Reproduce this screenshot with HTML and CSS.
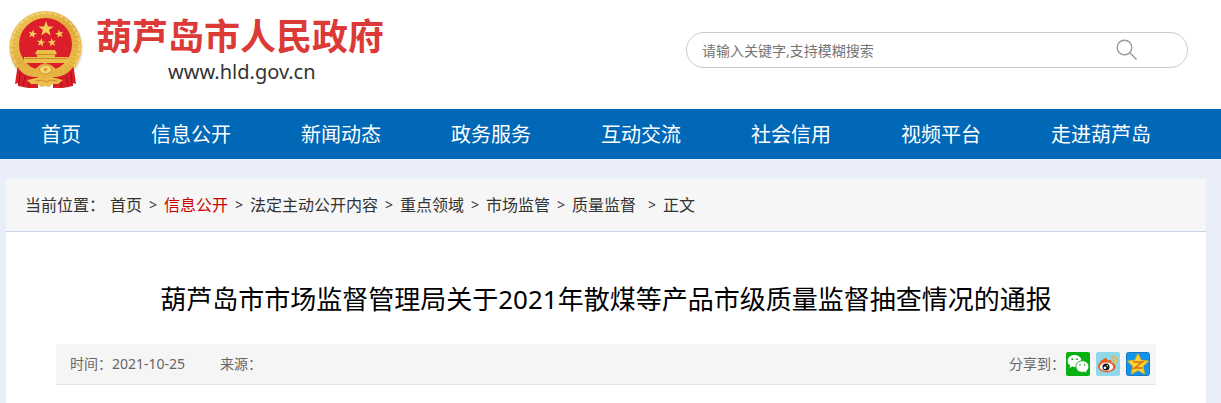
FILE: index.html
```html
<!DOCTYPE html>
<html lang="zh-CN">

<head>
    <meta charset="UTF-8">
    <meta name="viewport" content="width=device-width, initial-scale=1.0">
    <title>葫芦岛市人民政府</title>
    <link rel="stylesheet" href="styles.css">
</head>

<body>
    <header class="header">
        <div class="wrap header-inner">
            <a class="logo" href="#">
                <svg class="emblem" viewBox="0 0 78 84" aria-hidden="true">
                    <defs>
                        <linearGradient id="gold" x1="0" y1="0" x2="1" y2="1">
                            <stop offset="0" stop-color="#f3cf62" />
                            <stop offset="0.5" stop-color="#e2ad3c" />
                            <stop offset="1" stop-color="#f0c553" />
                        </linearGradient>
                        <path id="star" d="M0-10 2.4-3.1 9.5-3.1 3.8 1.2 5.9 8.1 0 4-5.9 8.1-3.8 1.2-9.5-3.1-2.4-3.1z" />
                    </defs>
                    <circle cx="38" cy="40" r="37" fill="#e9e4df" />
                    <circle cx="37.500" cy="39" r="36" fill="url(#gold)" />
                    <circle cx="37.500" cy="39" r="31" fill="none" stroke="#c88d28" stroke-width="7" stroke-dasharray="1 3" opacity="0.3" />
                    <circle cx="37.500" cy="39" r="34" fill="none" stroke="#fae697" stroke-width="2" stroke-dasharray="4 2" opacity="0.5" />
                    <path fill="#d81e28" d="M10 57q3 8 12 10l8 2v11H20l-10-2 0-3-3 1 2-14zM65 57q-3 8-12 10l-8 2v11h10l10-2 0-3 3 1-2-14z" />
                    <path stroke="#9c1520" stroke-width="1" fill="none" d="M12 64l-1 13M17 68l-2 10M22 70l-1 9M63 64l1 13M58 68l2 10M53 70l1 9" />
                    <circle cx="37.500" cy="36.500" r="26.500" fill="#dc1e2b" />
                    <g fill="#f5cf5b">
                        <use href="#star" transform="translate(38 21) scale(.8)" />
                        <use href="#star" transform="translate(24.500 26) rotate(12) scale(.45)" />
                        <use href="#star" transform="translate(51.500 26) rotate(-12) scale(.45)" />
                        <use href="#star" transform="translate(33 34.500) rotate(8) scale(.45)" />
                        <use href="#star" transform="translate(44 34.500) rotate(-8) scale(.45)" />
                    </g>
                    <path fill="#edbd4a" d="M29 42h18l2 4-2 0v3h13v6H16v-6h13v-3h-2z" />
                    <path stroke="#c98727" stroke-width="1" fill="none" d="M28 46.500h20M17 50.500h42" />
                    <path fill="#e6b241" d="M14 55q5 5 13 6l5-4 5-2 6 2 5 4q8-1 13-6l5 3q-7 10-18 11l-6 0-5 3-5-3-6 0q-12-1-17-11z" />
                    <ellipse cx="37.500" cy="61.500" rx="6" ry="4.500" fill="#f6d672" stroke="#c98727" stroke-width="0.800" />
                    <circle cx="37.500" cy="61.500" r="1.700" fill="#d99b31" />
                    <path fill="#edbd4a" d="M24 71l8-2 5 2 6-2 8 2 4 1-5 4-6 0-3 3-4-1-4 1-3-3-7 0-4-4z" />
                    <path stroke="#c98727" fill="none" d="M28 73l6-1 4 2 5-2 6 1" />
                </svg>
                <span class="logo-text">
                    <span class="logo-name">葫芦岛市人民政府</span>
                    <span class="logo-url">www.hld.gov.cn</span>
                </span>
            </a>
            <form class="search" role="search">
                <input class="search-input" type="text" aria-label="搜索" placeholder="请输入关键字,支持模糊搜索">
                <button class="search-btn" type="button" aria-label="搜索">
                    <svg width="22" height="22" viewBox="0 0 22 22" fill="none" stroke="#999" stroke-width="1.4">
                        <circle cx="8.500" cy="8.500" r="7.300" />
                        <path d="M13.600 13.600L20.500 20.500" />
                    </svg>
                </button>
            </form>
        </div>
    </header>

    <nav class="nav">
        <div class="wrap nav-inner">
            <a href="#">首页</a>
            <a href="#">信息公开</a>
            <a href="#">新闻动态</a>
            <a href="#">政务服务</a>
            <a href="#">互动交流</a>
            <a href="#">社会信用</a>
            <a href="#">视频平台</a>
            <a href="#">走进葫芦岛</a>
        </div>
    </nav>

    <main class="wrap main">
        <div class="crumbs">
            <span class="crumbs-label">当前位置：</span>
            <a href="#">首页</a>
            <span class="sep">&gt;</span>
            <a class="active" href="#">信息公开</a>
            <span class="sep">&gt;</span>
            <a href="#">法定主动公开内容</a>
            <span class="sep">&gt;</span>
            <a href="#">重点领域</a>
            <span class="sep">&gt;</span>
            <a href="#">市场监管</a>
            <span class="sep">&gt;</span>
            <a href="#">质量监督</a>
            <span class="sep sep-last">&gt;</span>
            <span>正文</span>
        </div>

        <article class="article">
            <h1 class="title">葫芦岛市市场监督管理局关于2021年散煤等产品市级质量监督抽查情况的通报</h1>
            <div class="meta">
                <span class="date">时间：2021-10-25</span>
                <span>来源：</span>
                <div class="share">
                    <span class="share-label">分享到：</span>
                    <a href="#" aria-label="微信">
                        <svg width="24" height="24" viewBox="0 0 24 24">
                            <rect width="24" height="24" rx="2" fill="#08b112" />
                            <path fill="#fff" d="M8.500 3C4.600 3 1.700 5.600 1.700 8.900c0 2 1 3.600 2.600 4.700L3.600 16l2.700-1.500 2.400.4C12.600 14.900 15.500 12.300 15.500 8.900S12.400 3 8.500 3z" />
                            <path fill="#fff" stroke="#08b112" d="M16.300 8.700c-3.700 0-6.400 2.600-6.400 5.800s2.700 5.900 6.400 5.900l2-.3 2.800 1.600-.7-2.500c1.500-1.100 2.500-2.800 2.500-4.700 0-3.200-2.900-5.800-6.600-5.800z" />
                            <g fill="#08a012">
                                <circle cx="6.200" cy="7.200" r="0.900" />
                                <circle cx="11" cy="7.200" r="0.900" />
                                <circle cx="14" cy="13" r="0.800" />
                                <circle cx="18.600" cy="13" r="0.800" />
                            </g>
                        </svg>
                    </a>
                    <a href="#" aria-label="新浪微博">
                        <svg width="24" height="24" viewBox="0 0 24 24">
                            <rect width="24" height="24" rx="2" fill="#90d7e9" />
                            <path fill="#ee5a20" d="M8.800 6.300c1.600-.8 2.600.3 2.200 2.300 2.700-1.100 5-.8 4.500 1.800 2.500.6 4 2 4 4 0 3.400-4.300 5.800-9 5.800S2 18 2 14.600c0-3 3.700-6.800 6.800-8.300z" />
                            <ellipse cx="10.500" cy="14.800" rx="6.700" ry="4.300" fill="#fff" />
                            <circle cx="10" cy="15" r="3.500" fill="#151515" />
                            <circle cx="9" cy="15.700" r="1.300" fill="#fff" />
                            <circle cx="11.400" cy="13.700" r="0.700" fill="#fff" />
                            <path fill="none" stroke="#f4b434" stroke-width="1.500" stroke-linecap="round" d="M15.800 4.500c3.700-.6 6.200 2.300 5.100 6M15.900 7.500c1.700-.2 2.600.9 2.200 2.600" />
                        </svg>
                    </a>
                    <a href="#" aria-label="QQ空间">
                        <svg width="24" height="24" viewBox="0 0 24 24">
                            <rect x="0.500" y="0.500" width="23" height="23" rx="2" fill="#1593e8" stroke="#1279c4" />
                            <path fill="#ffd42c" stroke="#f2ae1b" stroke-width="0.800" stroke-linejoin="round" d="M12 1.500l3.100 6.700 7.400.9-5.400 5.100 1.500 7.800-6.600-3.700L5.400 22l1.500-7.800-5.400-5.100 7.400-.9z" />
                            <path fill="none" stroke="#d9791a" stroke-width="1.700" d="M7.300 9.800q4 .7 9 .1l-7.800 6.200q4-.6 8 .1" />
                        </svg>
                    </a>
                </div>
            </div>
        </article>
    </main>
</body>

</html>
```
FILE: styles.css
```css
* {
    box-sizing: border-box;
}

body {
    margin: 0;
    background: #eaeef8;
    color: #333;
    font-family: "Noto Sans", "Noto Sans CJK SC", sans-serif;
    font-size: 16px;
}

a {
    color: inherit;
    text-decoration: none;
}

svg {
    display: block;
}

.wrap {
    max-width: 1200px;
    margin: 0 15px 0 6px;
}

.header {
    background: #fff;
}

.header-inner {
    display: flex;
    justify-content: space-between;
    align-items: flex-start;
    padding: 8px 18px 17px 0;
}

.logo {
    display: flex;
    gap: 10px;
}

.emblem {
    width: 78px;
    height: 84px;
    margin-left: 2px;
}

.logo-text {
    display: flex;
    flex-direction: column;
    padding-top: 8px;
}

.logo-name {
    color: #db3a37;
    font-size: 36px;
    font-weight: bold;
    line-height: 42px;
}

.logo-url {
    font-size: 20px;
    line-height: 28px;
    padding-left: 72px;
}

.search {
    display: flex;
    align-items: center;
    width: 502px;
    height: 36px;
    margin-top: 24px;
    padding: 0 49px 0 15px;
    border: 1px solid #ccc;
    border-radius: 18px;
}

.search-input {
    flex: 1;
    min-width: 0;
    padding: 0;
    border: 0;
    outline: 0;
    background: none;
    font-family: inherit;
    font-size: 14px;
}

.search-input::placeholder {
    color: #757575;
}

.search-btn {
    padding: 0;
    border: 0;
    background: none;
    cursor: pointer;
}

.nav {
    background: #0068b7;
}

.nav-inner {
    display: flex;
    padding-top: 2px;
}

.nav a {
    padding: 0 35px;
    color: #fff;
    font-size: 20px;
    line-height: 48px;
    white-space: nowrap;
}

.main {
    margin-top: 20px;
    background: #fff;
}

.crumbs {
    display: flex;
    padding: 0 19px;
    background: #f6f6f6;
    border-bottom: 1px solid #c8d3e9;
    line-height: 52px;
}

.crumbs-label {
    margin-right: 5px;
}

.crumbs .active {
    color: #c00;
}

.sep {
    width: 22px;
    font-size: 14px;
    text-align: center;
}

.sep-last {
    margin-left: 5px;
}

.article {
    padding: 47px 50px 18px;
}

.title {
    margin: 0;
    color: #000;
    font-size: 26px;
    font-weight: normal;
    line-height: 40px;
    text-align: center;
}

.meta {
    display: flex;
    align-items: center;
    gap: 35px;
    margin-top: 25px;
    padding: 0 6px 0 14px;
    background: #f5f5f5;
    border-bottom: 1px solid #e3e3e3;
    color: #666;
    font-size: 14px;
    line-height: 40px;
}

.share {
    display: flex;
    align-items: center;
    gap: 6px;
    margin-left: auto;
}

.share-label {
    margin-right: -5px;
}
```
